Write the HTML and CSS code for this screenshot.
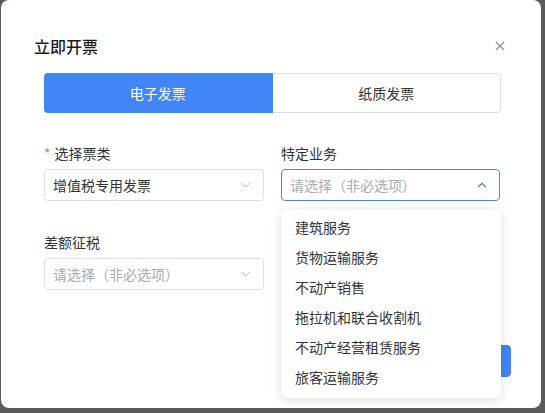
FILE: index.html
```html
<!DOCTYPE html>
<html lang="zh-CN">
<head>
    <meta charset="UTF-8">
    <meta name="viewport" content="width=device-width, initial-scale=1.0">
    <title>立即开票</title>
    <link rel="stylesheet" href="styles.css">
</head>
<body>
  <div class="dialog">
    <div class="dialog-header">
      <h2 class="dialog-title">立即开票</h2>
      <span class="close-btn">
        <svg width="10" height="10" viewBox="0 0 10 10"><path d="M1 1 L9 9 M9 1 L1 9" stroke="#8a8d93" stroke-width="1.2" fill="none"/></svg>
      </span>
    </div>

    <div class="dialog-body">
      <div class="seg">
        <span class="seg-item active">电子发票</span>
        <span class="seg-item">纸质发票</span>
      </div>

      <div class="form-grid">
        <div class="field">
          <label class="field-label"><span class="req">*</span>选择票类</label>
          <div class="select">
            <span class="select-value">增值税专用发票</span>
            <svg class="arrow" width="10" height="6" viewBox="0 0 10 6"><path d="M1 0.8 L5 4.8 L9 0.8" stroke="#b4b7bd" stroke-width="1" fill="none"/></svg>
          </div>
        </div>

        <div class="field">
          <label class="field-label">特定业务</label>
          <div class="select focused">
            <span class="select-placeholder">请选择（非必选项）</span>
            <svg class="arrow" width="10" height="6" viewBox="0 0 10 6"><path d="M1 5.2 L5 1.2 L9 5.2" stroke="#6f85ad" stroke-width="1.3" fill="none"/></svg>
            <ul class="dropdown">
              <li>建筑服务</li>
              <li>货物运输服务</li>
              <li>不动产销售</li>
              <li>拖拉机和联合收割机</li>
              <li>不动产经营租赁服务</li>
              <li>旅客运输服务</li>
            </ul>
          </div>
        </div>

        <div class="field">
          <label class="field-label">差额征税</label>
          <div class="select">
            <span class="select-placeholder">请选择（非必选项）</span>
            <svg class="arrow" width="10" height="6" viewBox="0 0 10 6"><path d="M1 0.8 L5 4.8 L9 0.8" stroke="#b4b7bd" stroke-width="1" fill="none"/></svg>
          </div>
        </div>
      </div>
    </div>

    <div class="dialog-footer">
      <button class="btn btn-primary"></button>
    </div>
  </div>
</body>
</html>
```

FILE: styles.css
```css
body {
    font-family: "Noto Sans CJK SC", "Noto Sans", sans-serif;
    margin: 0;
    padding: 0;
    background-color: #5a5a5a;
    height: 413px;
    overflow: hidden;
}
.dialog {
    position: relative;
    margin-left: 1px;
    width: 540px;
    height: 408px;
    background-color: #fff;
    border-radius: 8px;
    box-sizing: border-box;
}
.dialog-header {
    display: flex;
    align-items: center;
    justify-content: space-between;
    padding: 34px 36px 0 33px;
    height: 24px;
}
.dialog-title {
    margin: 0;
    font-size: 16px;
    line-height: 24px;
    font-weight: 500;
    color: #1d1d1f;
}
.close-btn {
    display: flex;
    width: 10px;
    height: 10px;
}
.dialog-body {
    padding: 15px 40px 0 43px;
}
.seg {
    display: flex;
    height: 40px;
}
.seg-item {
    flex: 1;
    display: flex;
    align-items: center;
    justify-content: center;
    font-size: 14px;
    color: #333;
    border: 1px solid #dcdfe6;
    border-left: none;
    border-radius: 0 4px 4px 0;
}
.seg-item.active {
    background-color: #4286f5;
    border-color: #4286f5;
    color: #fff;
    border-radius: 4px 0 0 4px;
}
.form-grid {
    display: grid;
    grid-template-columns: 220px 219px;
    column-gap: 17px;
    row-gap: 31px;
    margin-top: 30px;
}
.field-label {
    display: block;
    font-size: 14px;
    line-height: 20px;
    color: #333;
    margin-bottom: 6px;
}
.req {
    color: #f56c6c;
    margin-right: 4px;
}
.select {
    position: relative;
    display: flex;
    align-items: center;
    justify-content: space-between;
    height: 32px;
    padding: 0 12px 0 8px;
    border: 1px solid #dcdfe6;
    border-radius: 4px;
    box-sizing: border-box;
    font-size: 14px;
}
.select.focused {
    border-color: #4a86e8;
}
.select-value {
    color: #333;
}
.select-placeholder {
    color: #a8abb2;
}
.dropdown {
    position: absolute;
    top: 40px;
    left: -1px;
    width: 220px;
    margin: 0;
    padding: 3px 0 5px;
    list-style-type: none;
    background-color: #fff;
    border-radius: 6px;
    box-shadow: 0 2px 12px rgba(0, 0, 0, 0.14);
    z-index: 10;
}
.dropdown li {
    height: 30px;
    line-height: 29px;
    padding-left: 14px;
    font-size: 14px;
    color: #333;
}
.dialog-footer {
    display: flex;
    justify-content: flex-end;
    padding-right: 30px;
    margin-top: 55px;
}
.btn {
    width: 70px;
    height: 32px;
    font-family: inherit;
    font-size: 14px;
    border: 1px solid #dcdfe6;
    border-radius: 4px;
    background-color: #fff;
    color: #333;
}
.btn-primary {
    background-color: #4286f5;
    border-color: #4286f5;
    color: #fff;
}
```
